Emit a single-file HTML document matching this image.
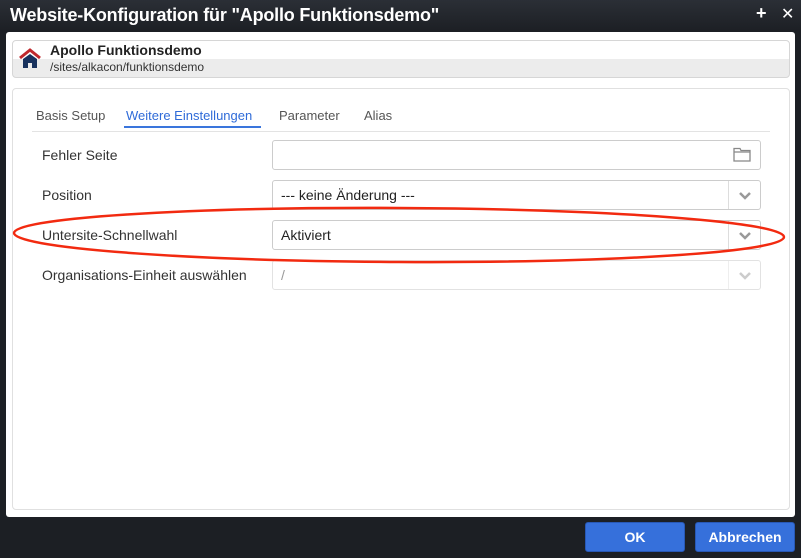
<!DOCTYPE html>
<html><head><meta charset="utf-8"><style>
*{box-sizing:border-box;margin:0;padding:0}
body{width:801px;height:558px;background:#1c1f24;font-family:"Liberation Sans","DejaVu Sans",sans-serif;position:relative;overflow:hidden}
.title{position:absolute;left:0;top:0;width:801px;height:30px;background:linear-gradient(#2b2f36,#1d2025);color:#fff;font-size:18px;font-weight:bold;padding:5px 0 0 10px;letter-spacing:-0.2px}
.ctl{position:absolute;top:3px;color:#fff;font-weight:bold;font-size:18px}
.main{position:absolute;left:6px;top:32px;width:789px;height:485px;background:#fff;border-radius:3px}
.hdr{position:absolute;left:12px;top:40px;width:778px;height:38px;border:1px solid #d6d6d6;border-radius:4px;background:linear-gradient(#fff 0,#fff 50%,#ececec 50%)}
.hdr .t{position:absolute;left:37px;top:1px;font-size:14px;font-weight:bold;color:#222}
.hdr .s{position:absolute;left:37px;top:19px;font-size:12px;color:#333}
.panel{position:absolute;left:12px;top:88px;width:778px;height:422px;border:1px solid #e0e0e0;border-radius:4px}
.tab{position:absolute;top:108px;font-size:13px;color:#555}
.lbl{position:absolute;left:42px;font-size:14px;color:#333}
.in{position:absolute;left:272px;width:489px;height:30px;border:1px solid #ccc;border-radius:3px;font-size:14px;color:#222;padding:6px 8px}
.dd{position:absolute;right:0;top:0;width:32px;height:28px;border-left:1px solid #ddd}
.btn{position:absolute;top:522px;height:30px;background:#3670db;border:1px solid #2858b5;border-radius:3px;color:#fff;font-size:14px;font-weight:bold;text-align:center;line-height:28px}
</style></head><body>
<div class="title">Website-Konfiguration für "Apollo Funktionsdemo"</div>
<div class="ctl" style="left:756px">+</div>
<div class="ctl" style="left:781px;font-size:16px;top:4px">✕</div>
<div class="main"></div>
<div class="hdr">
<svg style="position:absolute;left:5px;top:5px" width="24" height="24" viewBox="0 0 24 24"><path d="M2 12 L12 4 L22 12" stroke="#c0282d" stroke-width="3" fill="none"/><path d="M5 13 L12 8 L19 13 V22 H14 V17 H10 V22 H5Z" fill="#18325e"/></svg>
<div class="t">Apollo Funktionsdemo</div><div class="s">/sites/alkacon/funktionsdemo</div></div>
<div class="panel"></div>
<div class="tab" style="left:36px">Basis Setup</div>
<div class="tab" style="left:126px;color:#2f6bd8">Weitere Einstellungen</div>
<div style="position:absolute;left:124px;top:126px;width:137px;height:2px;background:#3a75dc"></div>
<div class="tab" style="left:279px">Parameter</div>
<div class="tab" style="left:364px">Alias</div>
<div style="position:absolute;left:32px;top:131px;width:738px;height:1px;background:#e3e3e3"></div>
<div class="lbl" style="top:147px">Fehler Seite</div>
<div class="lbl" style="top:187px">Position</div>
<div class="lbl" style="top:227px">Untersite-Schnellwahl</div>
<div class="lbl" style="top:267px">Organisations-Einheit auswählen</div>
<div class="in" style="top:140px"><svg style="position:absolute;right:9px;top:6px" width="18" height="15" viewBox="0 0 18 15"><path d="M1 1.5 H7 L8 3.5 H17 V14 H1 Z M1 5 H17" stroke="#888" stroke-width="1.3" fill="none"/></svg></div>
<div class="in" style="top:180px">--- keine Änderung ---<div class="dd"><svg style="position:absolute;left:9px;top:10px" width="14" height="9"><path d="M2 2 L7 7 L12 2" stroke="#999" stroke-width="2.5" fill="none"/></svg></div></div>
<div class="in" style="top:220px">Aktiviert<div class="dd"><svg style="position:absolute;left:9px;top:10px" width="14" height="9"><path d="M2 2 L7 7 L12 2" stroke="#999" stroke-width="2.5" fill="none"/></svg></div></div>
<div class="in" style="top:260px;border-color:#e2e2e2;color:#999">/<div class="dd" style="border-color:#eee"><svg style="position:absolute;left:9px;top:10px" width="14" height="9"><path d="M2 2 L7 7 L12 2" stroke="#ccc" stroke-width="2.5" fill="none"/></svg></div></div>
<svg style="position:absolute;left:0;top:0" width="801" height="558"><ellipse cx="399" cy="235" rx="385" ry="27" fill="none" stroke="#f22a10" stroke-width="2.5" transform="rotate(0.3 399 235)"/></svg>
<div class="btn" style="left:585px;width:100px">OK</div>
<div class="btn" style="left:695px;width:100px">Abbrechen</div>
</body></html>
